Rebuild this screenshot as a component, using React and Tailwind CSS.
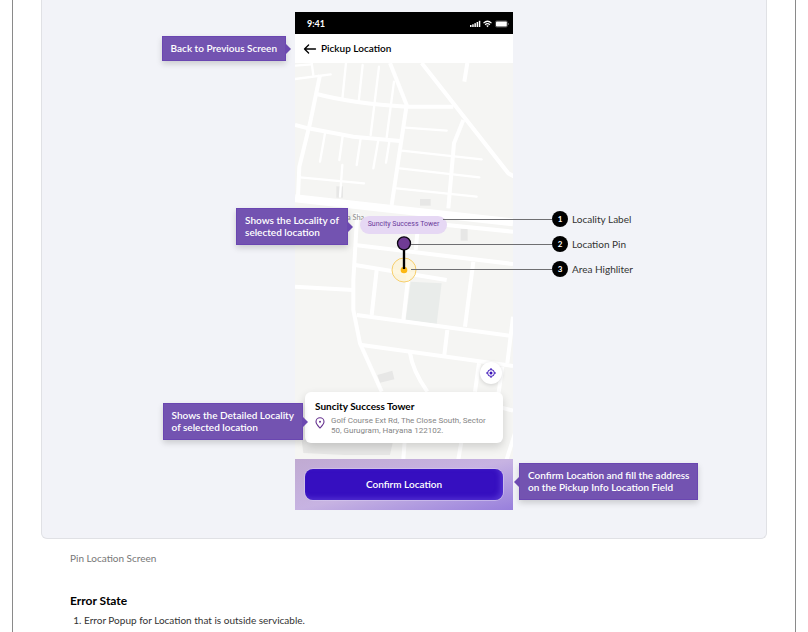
import clsx from 'clsx'

const mainRoads = [
    'M285 0 335 126 290 426',
    'M380 0 475 121 640 331 660 342',
    'M335 131H475',
    'M65 93Q175 122 335 131',
    'M75 36 45 181 13 311 9 400',
    'M0 186 40 196 175 221 315 234',
    'M505 171 477 241 460 436',
    'M517 0 508 56',
    'M455 486 654 506',
    'M187 450 175 651V741L195 841 260 986',
    'M0 671 175 681',
    'M180 546 654 603',
    'M180 606 455 651',
    'M245 621 230 756',
    'M340 640 325 771',
    'M535 596 510 791',
    'M370 480 362 561',
    'M185 756 645 818',
    'M200 846 654 909',
    'M457 801 448 876',
    'M654 761 637 901',
    'M345 869Q352 921 397 986',
    'M552 901 540 986',
    'M622 911 605 1030 654 1043',
    'M330 1120 325 1189',
    'M502 1120 490 1189',
    'M660 1110 635 1189'
]

const lanes = [
    'M0 48 107 34',
    'M0 8 50 4',
    'M50 0 55 36',
    'M153 0 142 108',
    'M203 6 191 116',
    'M252 11 227 216',
    'M297 56 275 223',
    'M330 194 455 203',
    'M320 263 560 289',
    'M315 316 553 343',
    'M305 376 545 401',
    'M90 211 75 296',
    'M143 219 133 291',
    'M197 226 185 306',
    'M250 231 235 316',
    'M283 236 273 299',
    'M15 343 207 361',
    'M142 306 135 401'
]

const legend = [
    { label: 'Locality Label', line: 'w-[109px]' },
    { label: 'Location Pin', line: 'w-[141px]' },
    { label: 'Area Highliter', line: 'w-[141px]' }
]

function Callout({ children, className, side = 'right' }) {
    return (
        <div className={clsx('absolute z-10 whitespace-nowrap border border-[#6a46b1] bg-[#7353b1] px-2 pt-[5px] pb-[6px] text-[10px] leading-3 font-semibold text-white shadow-[0_3px_6px_rgba(0,0,0,0.16)]', className)}>
            {children}
            <svg
                viewBox="0 0 6 12"
                className={clsx('absolute top-1/2 h-3 w-1.5 -translate-y-1/2', side === 'right' ? 'left-full' : 'right-full rotate-180')}
            >
                <path d="M0 0 6 6 0 12Z" fill="#6c49b0" />
            </svg>
        </div>
    )
}

function StatusBar() {
    return (
        <div className="flex h-[22px] items-center justify-between bg-black pt-0.5 pr-1 pl-3 text-white">
            <span className="text-[9px] font-bold">9:41</span>
            <svg viewBox="0 0 40 8" className="h-2 w-10" fill="#fff">
                <rect x="1" y="5" width="1.5" height="2" />
                <rect x="3.2" y="4.3" width="1.5" height="2.7" />
                <rect x="5.4" y="3.2" width="1.5" height="3.8" />
                <rect x="7.6" y="2" width="1.5" height="5" />
                <rect x="9.8" y="0.8" width="1.5" height="6.2" />
                <g fill="none" stroke="#fff" strokeWidth="1.2">
                    <path d="M14.5 3.1Q18.5 -0.6 22.5 3.1" />
                    <path d="M16.1 4.8Q18.5 2.6 20.9 4.8" />
                </g>
                <path d="M17.2 5.8Q18.5 4.8 19.8 5.8L18.5 7.3Z" />
                <rect x="26.4" y="0.9" width="12" height="6.2" rx="1.4" fill="none" stroke="#777" strokeWidth="0.6" />
                <rect x="27" y="1.5" width="10.8" height="5" rx="0.8" />
                <rect x="39" y="3" width="0.7" height="2" fill="#777" />
            </svg>
        </div>
    )
}

function MapCanvas() {
    return (
        <svg viewBox="0 0 654 1188" className="block w-full bg-[#f5f5f3]">
            <g fill="#e7e7e6">
                <path d="M124 370h20v34h-20z" />
                <path d="M375 408h32v20h-32z" />
                <path d="M497 498h21v35h-21z" />
                <path d="M247 936 292 923 298 949 255 959Z" />
                <path d="M20 1130H295L285 1176H150L25 1170Z" />
            </g>
            <path d="M347 656 440 661 425 783 332 771Z" fill="#e9ecea" />
            <g fill="none" stroke="#fff">
                <g strokeWidth="7" strokeLinecap="round">
                    {lanes.map((d) => <path key={d} d={d} />)}
                </g>
                <g strokeWidth="12">
                    {mainRoads.map((d) => <path key={d} d={d} />)}
                </g>
                <path d="M0 406 270 436 654 478" strokeWidth="24" />
            </g>
            <text x="156" y="472" fill="#8b8b8b" fontSize="22" fontFamily="Lato, sans-serif">a Sha</text>
            <circle cx="327" cy="621" r="36" fill="#fdf3d3" fillOpacity="0.7" stroke="#f7cf6c" strokeWidth="3" />
            <circle cx="327" cy="621" r="10" fill="#fcb813" />
            <path d="M327 560V618" stroke="#000" strokeWidth="7" />
            <circle cx="327" cy="541" r="19.5" fill="#6f3b94" stroke="#0c0713" strokeWidth="4" />
        </svg>
    )
}

function PhoneScreen() {
    return (
        <div className="w-full">
            <StatusBar />
            <header className="flex h-[29px] items-center gap-1 bg-white pl-2">
                <button type="button" aria-label="Back" className="flex">
                    <svg viewBox="0 0 14 12" className="h-3 w-3.5" fill="none" stroke="#000" strokeWidth="1.3" strokeLinecap="round" strokeLinejoin="round">
                        <path d="M12.5 6H1.5M5.6 2 1.5 6 5.6 10" />
                    </svg>
                </button>
                <h2 className="text-[10px] font-semibold">Pickup Location</h2>
            </header>
            <div className="relative">
                <MapCanvas />
                <div className="absolute top-[153px] left-[65px] h-[18px] w-[87px] rounded-full bg-[#e6d8f4] text-center font-['Roboto',sans-serif] text-[7px] leading-[17px] whitespace-nowrap text-[#6a3a9b]">
                    Suncity Success Tower
                </div>
                <div className="absolute inset-x-2.5 bottom-4 flex flex-col gap-2">
                    <button type="button" aria-label="Use my location" className="mr-px flex size-[22px] items-center justify-center self-end rounded-full bg-white shadow-[0_1px_4px_rgba(0,0,0,0.15)]">
                        <svg viewBox="0 0 12 12" className="size-3" fill="none" stroke="#3a12b8" strokeWidth="1">
                            <circle cx="6" cy="6" r="3.4" />
                            <circle cx="6" cy="6" r="1.5" fill="#3a12b8" stroke="none" />
                            <path d="M6 1V2.6M6 9.4V11M1 6H2.6M9.4 6H11" />
                        </svg>
                    </button>
                    <div className="rounded-md bg-white px-2.5 pt-2 pb-[7px] shadow-[0_4px_10px_rgba(0,0,0,0.16)]">
                        <h3 className="text-[10px] leading-3 font-bold">Suncity Success Tower</h3>
                        <div className="mt-1 flex gap-1.5">
                            <svg viewBox="0 0 10 12" className="mt-px h-3 w-2.5 shrink-0" fill="none" stroke="#65318f" strokeWidth="1.1">
                                <path d="M5 11C3.2 9 1 6.9 1 4.7a4 4 0 0 1 8 0C9 6.9 6.8 9 5 11Z" />
                                <circle cx="5" cy="4.7" r="1" fill="#65318f" stroke="none" />
                            </svg>
                            <p className="font-['Roboto',sans-serif] text-[8px] leading-[10px] whitespace-nowrap text-[#858585]">
                                Golf Course Ext Rd, The Close South, Sector<br />
                                50, Gurugram, Haryana 122102.
                            </p>
                        </div>
                    </div>
                </div>
            </div>
            <div className="bg-linear-to-br from-[#c0aad2] via-[#c7b3e2] to-[#987fdc] p-2.5">
                <button type="button" className="h-[31px] w-full rounded-lg bg-[#360fc0] text-[10px] font-semibold text-white shadow-[0_0_0_1px_rgba(214,202,240,0.6),inset_-3px_-2px_5px_rgba(110,80,225,0.5)]">
                    Confirm Location
                </button>
            </div>
        </div>
    )
}

export default function App() {
    return (
        <main className="mx-3 min-h-screen overflow-hidden border-x border-[#8a8a8a] bg-white font-['Lato',sans-serif] text-black">
            <figure className="mx-7">
                <div className="rounded-b-md border border-t-0 border-[#e0e1e5] bg-[#f2f3f8] pt-3 pb-7">
                    <div className="relative mx-auto w-[218px]">
                        <PhoneScreen />
                        <Callout className="top-6 right-[227px]">Back to Previous Screen</Callout>
                        <Callout className="top-[196px] right-[165px]">Shows the Locality of<br />selected location</Callout>
                        <Callout className="top-[391px] right-[210px]">Shows the Detailed Locality<br />of selected location</Callout>
                        <Callout side="left" className="top-[451px] left-[224px]">Confirm Location and fill the address<br />on the Pickup Info Location Field</Callout>
                        <ol className="absolute top-[199px] left-[116px] flex flex-col items-start gap-[9px]">
                            {legend.map(({ label, line }, i) => (
                                <li key={label} className={clsx('flex items-center', i === 0 && 'ml-8')}>
                                    <span className={clsx('h-px bg-[#6f6f72]', line)} />
                                    <span className="flex size-4 items-center justify-center rounded-full bg-black text-[8px] font-bold text-white">{i + 1}</span>
                                    <span className="ml-1 text-[10px] leading-4 whitespace-nowrap text-[#333]">{label}</span>
                                </li>
                            ))}
                        </ol>
                    </div>
                </div>
                <figcaption className="mt-[11px] pl-[29px] text-[10px] leading-4 text-[#777]">Pin Location Screen</figcaption>
            </figure>
            <section className="mt-[27px] pr-7 pl-[57px]">
                <h2 className="text-[12px] leading-4 font-bold">Error State</h2>
                <ol className="mt-[3px] list-decimal pl-3.5 text-[10px] leading-4 text-[#333]">
                    <li>Error Popup for Location that is outside servicable.</li>
                </ol>
            </section>
        </main>
    )
}
